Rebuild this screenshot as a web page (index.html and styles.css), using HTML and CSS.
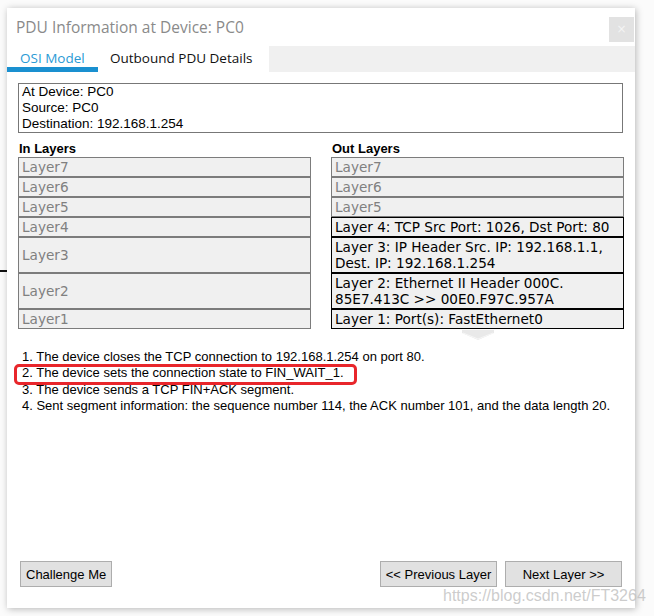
FILE: index.html
```html
<!DOCTYPE html>
<html>
<head>
<meta charset="utf-8">
<title>PDU Information at Device: PC0</title>
<link rel="stylesheet" href="styles.css">
</head>
<body>
<div class="backdrop-line"></div>
<div class="window">
  <div class="titlebar">
    <div class="title">PDU Information at Device: PC0</div>
    <div class="close">×</div>
  </div>
  <div class="tabbar">
    <div class="tab tab-osi active">OSI Model</div>
    <div class="tab tab-out">Outbound PDU Details</div>
    <div class="tab-fill"></div>
  </div>
  <div class="content">
    <div class="infobox">
      <div>At Device: PC0</div>
      <div>Source: PC0</div>
      <div>Destination: 192.168.1.254</div>
    </div>
    <div class="layers">
      <div class="heading">In Layers</div>
      <div class="heading">Out Layers</div>
      <div class="cell">Layer7</div><div class="cell">Layer7</div>
      <div class="cell">Layer6</div><div class="cell">Layer6</div>
      <div class="cell">Layer5</div><div class="cell">Layer5</div>
      <div class="cell">Layer4</div><div class="cell on">Layer 4: TCP Src Port: 1026, Dst Port: 80</div>
      <div class="cell">Layer3</div><div class="cell on">Layer 3: IP Header Src. IP: 192.168.1.1,<br>Dest. IP: 192.168.1.254</div>
      <div class="cell">Layer2</div><div class="cell on">Layer 2: Ethernet II Header 000C.<br>85E7.413C &gt;&gt; 00E0.F97C.957A</div>
      <div class="cell">Layer1</div><div class="cell on">Layer 1: Port(s): FastEthernet0</div>
      <div></div>
      <div class="chev">
        <svg width="32" height="11" viewBox="0 0 32 11"><polygon points="0,0 32,0 32,3 16,10 0,3" fill="#e9e9e9"/><polyline points="1,3 16,9 31,3" fill="none" stroke="#f7f7f7" stroke-width="1"/></svg>
      </div>
    </div>
    <div class="steps">
      <div>1. The device closes the TCP connection to 192.168.1.254 on port 80.</div>
      <div>2. The device sets the connection state to FIN_WAIT_1.</div>
      <div>3. The device sends a TCP FIN+ACK segment.</div>
      <div>4. Sent segment information: the sequence number 114, the ACK number 101, and the data length 20.</div>
    </div>
  </div>
  <div class="footer">
    <button class="btn btn-challenge">Challenge Me</button>
    <div class="spacer"></div>
    <button class="btn btn-nav">&lt;&lt; Previous Layer</button>
    <button class="btn btn-nav">Next Layer &gt;&gt;</button>
  </div>
</div>
<div class="highlight"></div>
<div class="watermark">https://blog.csdn.net/FT3264</div>
</body>
</html>
```

FILE: styles.css
```css
html, body {
  margin: 0;
  padding: 0;
}
body {
  width: 654px;
  height: 616px;
  overflow: hidden;
  background: #fbfbfb;
  position: relative;
  font-family: "Liberation Sans", Arial, sans-serif;
}
.backdrop-line {
  position: absolute;
  left: 0;
  top: 270px;
  width: 8px;
  height: 2px;
  background: #111;
}
.window {
  position: relative;
  margin: 8px 0 0 7px;
  width: 628px;
  height: 600px;
  background: #fff;
  box-shadow: 1px 1px 7px rgba(0, 0, 0, 0.28);
  display: flex;
  flex-direction: column;
}
.titlebar {
  height: 38px;
  display: flex;
  align-items: center;
}
.title {
  flex: 1;
  padding-left: 9px;
  font-family: "Open Sans", "Noto Sans", sans-serif;
  font-size: 15.5px;
  color: #8a8a8a;
  margin-top: -1px;
}
.close {
  align-self: flex-start;
  margin-top: 9px;
  margin-right: 1px;
  width: 25px;
  height: 25px;
  background: #e2e2e2;
  color: #f4f4f4;
  font-family: "DejaVu Sans", sans-serif;
  font-size: 12px;
  line-height: 25px;
  text-align: center;
}
.tabbar {
  height: 26px;
  display: flex;
}
.tab {
  font-family: "Open Sans", "Noto Sans", sans-serif;
  font-size: 13.5px;
  line-height: 25px;
  color: #111;
  box-sizing: border-box;
  white-space: nowrap;
}
.tab-osi {
  width: 91px;
  padding-left: 13px;
}
.tab-out {
  width: 171px;
  padding-left: 12px;
}
.tab.active {
  color: #2a9ad5;
  box-shadow: inset 0 -5px 0 #1a90d0;
}
.tab-fill {
  flex: 1;
  background: #f0f0f0;
}
.content {
  flex: 1;
  padding: 11px 12px 0 11px;
}
.infobox {
  border: 1px solid #777;
  padding: 0 3px;
  font-size: 13.5px;
  line-height: 16px;
  color: #000;
}
.layers {
  margin-top: 8px;
  display: grid;
  grid-template-columns: 293px 293px;
  column-gap: 20px;
}
.heading {
  font-weight: bold;
  font-size: 13px;
  line-height: 16px;
  color: #000;
  padding-left: 1px;
}
.cell {
  border: 1px solid #7c7c7c;
  background: #f0f0f0;
  color: #808080;
  font-family: "DejaVu Sans", Verdana, sans-serif;
  font-size: 13.6px;
  line-height: 16px;
  padding: 1px 3px;
  display: flex;
  align-items: center;
  white-space: nowrap;
}
.cell.on {
  border-color: #000;
  color: #000;
}
.chev {
  display: flex;
  justify-content: center;
  padding-top: 1px;
  height: 11px;
}
.chev svg {
  display: block;
}
.steps {
  margin-top: 8px;
  padding-left: 4px;
  font-size: 13px;
  line-height: 16.3px;
  color: #000;
}
.footer {
  display: flex;
  align-items: center;
  padding: 0 13px 21px 13px;
}
.spacer {
  flex: 1;
}
.btn {
  height: 26px;
  background: #e1e1e1;
  border: 1px solid #adadad;
  font-family: "Liberation Sans", Arial, sans-serif;
  font-size: 13px;
  color: #000;
  padding: 0 5px;
  margin: 0;
  white-space: nowrap;
}
.btn-nav {
  width: 117px;
  padding: 0;
  margin-left: 8px;
}
.highlight {
  position: absolute;
  left: 14px;
  top: 364px;
  width: 337px;
  height: 15px;
  border: 3px solid #e8262b;
  border-radius: 5px;
}
.watermark {
  position: absolute;
  left: 443px;
  top: 587px;
  font-size: 16px;
  color: rgba(195, 195, 195, 0.85);
  white-space: nowrap;
}
```
